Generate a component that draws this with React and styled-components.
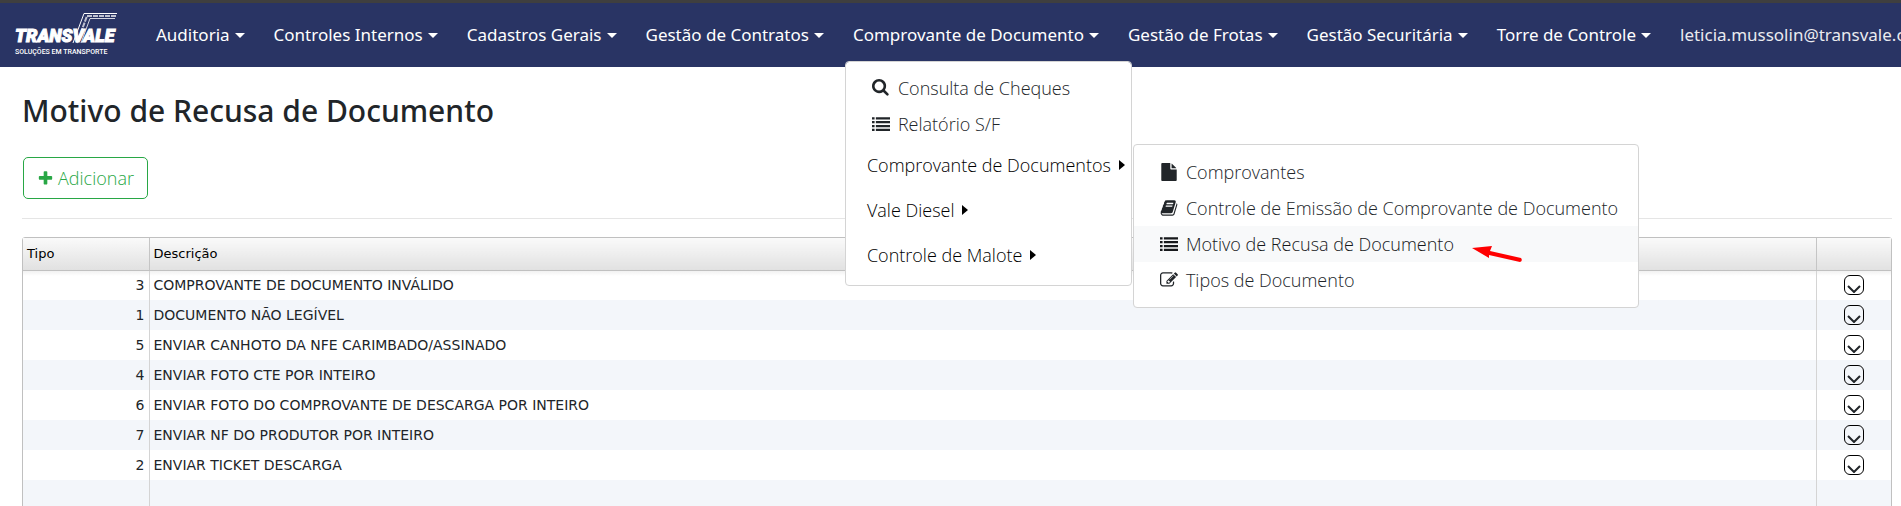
import React from "react";
import styled, { createGlobalStyle, css } from "styled-components";

const GlobalStyle = createGlobalStyle`
  *, *::before, *::after { box-sizing: border-box; }
  body {
    margin: 0;
    background: #fff;
    color: #212529;
    font-family: "Noto Sans", "Open Sans", sans-serif;
    font-size: 17px;
    line-height: 26px;
  }
  ul { list-style: none; margin: 0; padding: 0; }
  a { color: inherit; text-decoration: none; }
`;

const Page = styled.div`
  display: flex;
  flex-direction: column;
  height: 100vh;
  overflow: hidden;
`;

const Navbar = styled.header`
  display: flex;
  flex-shrink: 0;
  align-items: center;
  height: 67px;
  padding-left: 14px;
  border-top: 3px solid #3f3f3f;
  background: #293464;
  color: #fff;
`;

const Brand = styled.a`
  display: flex;
  width: 108px;
  margin-right: 26px;
`;

const NavList = styled.ul`
  display: flex;
  gap: 13px;
`;

const NavItem = styled.li`
  position: relative;
  display: flex;
  align-items: center;
  height: 50px;
  padding: 0 8px;
  white-space: nowrap;
`;

const NavLink = styled.a`
  display: flex;
  align-items: center;
  gap: 5px;
  opacity: ${(p) => (p.$muted ? 0.9 : 1)};
`;

const Caret = styled.span`
  border: 5px solid transparent;
  ${(p) =>
    p.$right
      ? css`
          border-left: 6px solid #000;
          border-right: 0;
        `
      : css`
          border-top-color: currentColor;
          border-bottom: 0;
        `}
`;

const menuPanel = css`
  position: absolute;
  border: 1px solid #d4d4d4;
  border-radius: 4px;
  background: #fff;
  background-clip: padding-box;
  color: #212529;
  font-family: "Open Sans", "Noto Sans", sans-serif;
  font-size: 18px;
  font-weight: 300;
`;

const Dropdown = styled.ul`
  ${menuPanel}
  top: calc(100% + 1px);
  left: 0;
  z-index: 10;
  width: 287px;
  padding: 8px 0;
`;

const Submenu = styled.ul`
  ${menuPanel}
  top: 2px;
  left: calc(100% + 2px);
  width: 506px;
  padding: 9px 0;
`;

const MenuLink = styled.a`
  position: relative;
  display: flex;
  align-items: center;
  gap: 8px;
  height: 36px;
  padding-left: 26px;
  background: ${(p) => (p.$active ? "#f8f9fa" : "transparent")};
  color: ${(p) => (p.$active ? "#16181b" : "inherit")};
`;

const GroupItem = styled.li`
  position: relative;
`;

const GroupLink = styled.a`
  display: flex;
  align-items: center;
  gap: 8px;
  height: 45px;
  padding-left: 21px;
  color: #000;
`;

const Pointer = styled.svg`
  position: absolute;
  left: 338px;
  top: 20px;
  width: 52px;
  height: 18px;
`;

const IconSvg = styled.svg`
  flex-shrink: 0;
  width: ${(p) => p.$size}px;
  height: ${(p) => p.$size}px;
  fill: currentColor;
`;

const Main = styled.main`
  flex: 1;
  min-height: 0;
  padding: 24px 9px 0 22px;
`;

const Title = styled.h1`
  margin: 0;
  font-size: 30px;
  font-weight: 500;
  line-height: 40px;
`;

const AddButton = styled.button`
  display: flex;
  align-items: center;
  gap: 4px;
  height: 42px;
  margin: 26px 0 0 1px;
  padding: 0 13px;
  border: 1px solid #28a745;
  border-radius: 5px;
  background: #fff;
  color: #28a745;
  font: 300 18px "Open Sans", "Noto Sans", sans-serif;
`;

const Divider = styled.hr`
  width: 100%;
  height: 1px;
  margin: 19px 0 18px;
  border: 0;
  background: #e5e5e5;
`;

const GridFrame = styled.div`
  width: 100%;
  border: 1px solid #c0c0c0;
  border-radius: 3px 3px 0 0;
`;

const Table = styled.table`
  width: 100%;
  table-layout: fixed;
  border-collapse: collapse;
  font: 14px "DejaVu Sans", sans-serif;
`;

const HeadCell = styled.th`
  width: ${(p) => p.$width || "auto"};
  height: 32px;
  padding: 0 4px;
  border-right: 1px solid #c5c5c5;
  border-bottom: 1px solid #c0c0c0;
  background: linear-gradient(#fafafa, #e1e1e1);
  color: #000;
  font-size: 13px;
  font-weight: 400;
  text-align: left;
  &:last-child { border-right: 0; }
`;

const Row = styled.tr`
  height: 30px;
  background: #fff;
  &:nth-child(even) { background: #f3f6fa; }
  &:first-child { background: linear-gradient(#efefef, #fff 6px); }
`;

const Cell = styled.td`
  height: 30px;
  padding: 0 4px;
  border-right: 1px solid #d4d4d4;
  text-align: ${(p) => p.$align || "left"};
  &:last-child { border-right: 0; }
`;

const RowButton = styled.button`
  display: flex;
  align-items: center;
  justify-content: center;
  width: 20px;
  height: 20px;
  margin: 0 auto;
  padding: 7px 0 0;
  border: 1px solid #000;
  border-radius: 6px;
  background: transparent;
`;

const ICONS = {
  search:
    "M1152 704q0-185-131.500-316.500t-316.500-131.500-316.500 131.500-131.500 316.500 131.500 316.500 316.500 131.500 316.500-131.500 131.500-316.500zm512 832q0 52-38 90t-90 38q-54 0-90-38l-343-342q-179 124-399 124-143 0-273.500-55.500t-225-150-150-225-55.500-273.500 55.500-273.500 150-225 225-150 273.500-55.500 273.500 55.500 225 150 150 225 55.500 273.500q0 220-124 399l343 343q37 37 37 90z",
  list:
    "M0 224h256v224h-256zM384 224h1408v224h-1408zM0 608h256v224h-256zM384 608h1408v224h-1408zM0 992h256v224h-256zM384 992h1408v224h-1408zM0 1376h256v224h-256zM384 1376h1408v224h-1408z",
  file:
    "M1152 512v-472q22 14 36 28l408 408q14 14 28 36h-472zm-128 32q0 40 28 68t68 28h544v1056q0 40-28 68t-68 28h-1344q-40 0-68-28t-28-68v-1600q0-40 28-68t68-28h800v544z",
  book:
    "M1703 478q40 57 18 129l-275 906q-19 64-76.500 107.500t-122.500 43.500h-923q-77 0-148.500-53.500t-99.500-131.500q-24-67-2-127 0-4 3-27t4-37q1-8-3-21.500t-3-19.500q2-11 8-21t16.500-23.500 16.500-23.500q23-38 45-91.500t30-91.500q3-10 .5-30t-.5-28q3-11 17-28t17-23q21-36 42-92t25-90q1-9-2.500-32t.5-28q4-13 22-30.500t22-22.500q19-26 42.500-84.500t27.500-96.500q1-8-3-25.500t-2-26.500q2-8 9-18t18-23 17-21q8-12 16.500-30.500t15-35 16-36 19.500-32 26.500-23.500 36-11.500 47.500 5.500l-1 3q38-9 51-9h761q74 0 114 56t18 130l-274 906q-36 119-71.500 153.500t-128.500 34.500h-869q-27 0-38 15-11 16-1 43 24 70 144 70h923q29 0 56-15.500t35-41.500l300-987q7-22 5-57 38 15 59 43zm-1064 2q-4 13 2 22.500t20 9.500h608q13 0 25.500-9.500t16.500-22.500l21-64q4-13-2-22.500t-20-9.500h-608q-13 0-25.500 9.500t-16.500 22.500zm-83 256q-4 13 2 22.500t20 9.500h608q13 0 25.500-9.500t16.500-22.500l21-64q4-13-2-22.500t-20-9.500h-608q-13 0-25.500 9.500t-16.500 22.500z",
  edit:
    "M888 1184l116-116-152-152-116 116v56h96v96h56zm440-720q-16-16-33 1l-350 350q-17 17-1 33t33-1l350-350q17-17 1-33zm80 594v190q0 119-84.500 203.500t-203.500 84.500h-832q-119 0-203.500-84.500t-84.500-203.500v-832q0-119 84.500-203.500t203.500-84.500h832q63 0 117 25 15 7 18 23 3 17-9 29l-49 49q-14 14-32 8-23-6-45-6h-832q-66 0-113 47t-47 113v832q0 66 47 113t113 47h832q66 0 113-47t47-113v-126q0-13 9-22l64-64q15-15 35-7t20 29zm-96-738l288 288-672 672h-288v-288zm444 132l-92 92-288-288 92-92q28-28 68-28t68 28l152 152q28 28 28 68t-28 68z",
  plus:
    "M1600 736v192q0 40-28 68t-68 28h-416v416q0 40-28 68t-68 28h-192q-40 0-68-28t-28-68v-416h-416q-40 0-68-28t-28-68v-192q0-40 28-68t68-28h416v-416q0-40 28-68t68-28h192q40 0 68 28t28 68v416h416q40 0 68 28t28 68z",
};

const Icon = ({ name, size = 18 }) => (
  <IconSvg $size={size} viewBox="0 0 1792 1792" aria-hidden="true">
    <path d={ICONS[name]} />
  </IconSvg>
);

const Logo = () => (
  <svg width="108" height="46" viewBox="0 0 108 46" role="img" aria-label="Transvale">
    <g fill="none" stroke="#fff">
      <path d="M103 1.500H70L59 31" />
      <path d="M102 4H73L63 31" strokeWidth="2" strokeDasharray="5 1" opacity=".7" />
      <path d="M101 6.500H76L67 31" opacity=".8" />
    </g>
    <text
      x="1"
      y="30"
      fill="#fff"
      stroke="#fff"
      strokeWidth="1"
      fontFamily="Roboto, Liberation Sans, sans-serif"
      fontSize="18"
      fontWeight="900"
      fontStyle="italic"
    >
      TRANSVALE
    </text>
    <text
      x="1"
      y="42"
      fill="#fff"
      fontFamily="Roboto, Liberation Sans, sans-serif"
      fontSize="7"
      fontWeight="500"
    >
      SOLUÇÕES EM TRANSPORTE
    </text>
  </svg>
);

const DocumentMenu = () => (
  <Dropdown>
    <li><MenuLink href="#cheques"><Icon name="search" />Consulta de Cheques</MenuLink></li>
    <li><MenuLink href="#relatorio"><Icon name="list" />Relatório S/F</MenuLink></li>
    <GroupItem>
      <GroupLink href="#comprovantes">Comprovante de Documentos<Caret $right /></GroupLink>
      <Submenu>
        <li><MenuLink href="#lista"><Icon name="file" />Comprovantes</MenuLink></li>
        <li>
          <MenuLink href="#emissao"><Icon name="book" />Controle de Emissão de Comprovante de Documento</MenuLink>
        </li>
        <li>
          <MenuLink href="#motivo" $active>
            <Icon name="list" />Motivo de Recusa de Documento
            <Pointer viewBox="0 0 52 18" aria-hidden="true">
              <path d="M0 2L20 0L18 5L49 12Q51 15 48 16L17 9L17 12Z" fill="#f00" />
            </Pointer>
          </MenuLink>
        </li>
        <li><MenuLink href="#tipos"><Icon name="edit" />Tipos de Documento</MenuLink></li>
      </Submenu>
    </GroupItem>
    <li><GroupLink href="#diesel">Vale Diesel<Caret $right /></GroupLink></li>
    <li><GroupLink href="#malote">Controle de Malote<Caret $right /></GroupLink></li>
  </Dropdown>
);

const NAV = [
  "Auditoria",
  "Controles Internos",
  "Cadastros Gerais",
  "Gestão de Contratos",
  "Comprovante de Documento",
  "Gestão de Frotas",
  "Gestão Securitária",
  "Torre de Controle",
];

const ROWS = [
  [3, "COMPROVANTE DE DOCUMENTO INVÁLIDO"],
  [1, "DOCUMENTO NÃO LEGÍVEL"],
  [5, "ENVIAR CANHOTO DA NFE CARIMBADO/ASSINADO"],
  [4, "ENVIAR FOTO CTE POR INTEIRO"],
  [6, "ENVIAR FOTO DO COMPROVANTE DE DESCARGA POR INTEIRO"],
  [7, "ENVIAR NF DO PRODUTOR POR INTEIRO"],
  [2, "ENVIAR TICKET DESCARGA"],
];

export default function App() {
  return (
    <Page>
      <GlobalStyle />
      <Navbar>
        <Brand href="#inicio"><Logo /></Brand>
        <nav>
          <NavList>
            {NAV.map((label) => (
              <NavItem key={label}>
                <NavLink href="#menu">{label}<Caret /></NavLink>
                {label === "Comprovante de Documento" && <DocumentMenu />}
              </NavItem>
            ))}
            <NavItem><NavLink href="#conta" $muted>leticia.mussolin@transvale.com.br</NavLink></NavItem>
          </NavList>
        </nav>
      </Navbar>
      <Main>
        <Title>Motivo de Recusa de Documento</Title>
        <AddButton type="button"><Icon name="plus" size={17} />Adicionar</AddButton>
        <Divider />
        <GridFrame>
          <Table>
            <thead>
              <tr>
                <HeadCell $width="126px">Tipo</HeadCell>
                <HeadCell>Descrição</HeadCell>
                <HeadCell $width="75px" aria-label="Ações" />
              </tr>
            </thead>
            <tbody>
              {ROWS.map(([tipo, descricao]) => (
                <Row key={tipo}>
                  <Cell $align="right">{tipo}</Cell>
                  <Cell>{descricao}</Cell>
                  <Cell>
                    <RowButton type="button" aria-label={`Ações de ${descricao}`}>
                      <svg width="14" height="8" viewBox="0 0 14 8" fill="none" stroke="#212529" strokeWidth="2">
                        <path d="M1 1L7 7L13 1" />
                      </svg>
                    </RowButton>
                  </Cell>
                </Row>
              ))}
              <Row><Cell /><Cell /><Cell /></Row>
            </tbody>
          </Table>
        </GridFrame>
      </Main>
    </Page>
  );
}
